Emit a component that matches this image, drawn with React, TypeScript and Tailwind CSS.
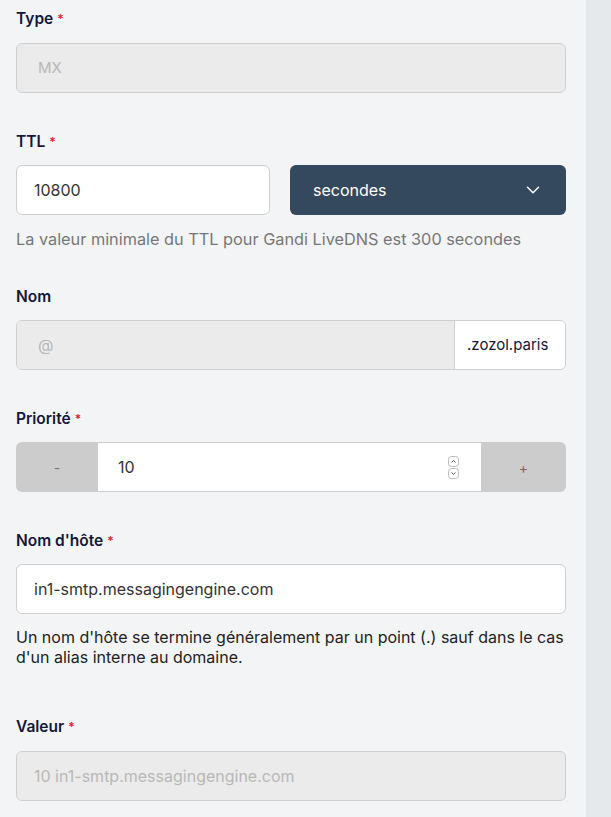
import { ChevronDown } from "lucide-react";

const font = { fontFamily: "Inter, 'Noto Sans', sans-serif" };

function Label({ text, required = true }: { text: string; required?: boolean }) {
  return (
    <div className="flex h-[20px] items-center text-[15.5px] font-semibold text-[#14163a]">
      {text}
      {required && <span className="ml-1 text-[12px] text-[#e4172c]">*</span>}
    </div>
  );
}

function Spinner() {
  return (
    <div className="flex flex-col gap-[1px]">
      <svg width="11" height="11" viewBox="0 0 11 11">
        <rect x="0.5" y="0.5" width="10" height="10" rx="3" fill="white" stroke="#bbb" />
        <path d="M3.5 6.5 L5.5 4.5 L7.5 6.5" fill="none" stroke="#555" strokeWidth="1" />
      </svg>
      <svg width="11" height="11" viewBox="0 0 11 11">
        <rect x="0.5" y="0.5" width="10" height="10" rx="3" fill="white" stroke="#bbb" />
        <path d="M3.5 4.5 L5.5 6.5 L7.5 4.5" fill="none" stroke="#555" strokeWidth="1" />
      </svg>
    </div>
  );
}

export default function App() {
  return (
    <div className="flex h-[817px] w-[611px] overflow-hidden bg-[#e6e9ec]" style={font}>
      <div className="w-[586px] bg-[#f3f4f6] pl-[16px] pr-[20px] pt-[9px]">
        {/* Type */}
        <Label text="Type" />
        <div className="mt-[14px] flex h-[50px] items-center rounded-[6px] border border-[#cfcfcf] bg-[#ebebeb] pl-[21px] text-[15px] text-[#b8b8b8]">
          MX
        </div>

        {/* TTL */}
        <div className="mt-[39px]">
          <Label text="TTL" />
        </div>
        <div className="mt-[13px] flex gap-[20px]">
          <div className="flex h-[50px] w-[254px] items-center rounded-[6px] border border-[#cfcfcf] bg-white pl-[17px] text-[16px] text-[#333]">
            10800
          </div>
          <div className="flex h-[50px] flex-1 items-center justify-between rounded-[6px] bg-[#34495e] pl-[23px] pr-[22px] text-[16px] text-white">
            secondes
            <ChevronDown size={22} strokeWidth={1.6} />
          </div>
        </div>
        <p className="mt-[14px] text-[16.3px] leading-[20px] text-[#777]">
          La valeur minimale du TTL pour Gandi LiveDNS est 300 secondes
        </p>

        {/* Nom */}
        <div className="mt-[38px]">
          <Label text="Nom" required={false} />
        </div>
        <div className="mt-[13px] flex h-[50px] overflow-hidden rounded-[6px] border border-[#cfcfcf]">
          <div className="flex flex-1 items-center bg-[#ebebeb] pl-[21px] text-[16px] text-[#b8b8b8]">@</div>
          <div className="flex w-[111px] items-center border-l border-[#cfcfcf] bg-white pl-[12px] text-[15px] text-[#14163a]">
            .zozol.paris
          </div>
        </div>

        {/* Priorité */}
        <div className="mt-[39px]">
          <Label text="Priorité" />
        </div>
        <div className="mt-[13px] flex h-[50px] overflow-hidden rounded-[6px] bg-[#cccccc]">
          <div className="flex w-[82px] items-center justify-center text-[14px] text-[#777]">-</div>
          <div className="my-[1px] flex flex-1 items-center justify-between bg-white pl-[20px] pr-[22px] text-[16px] text-[#333]">
            10
            <Spinner />
          </div>
          <div className="flex w-[85px] items-center justify-center text-[14px] text-[#8a5a5a]">+</div>
        </div>

        {/* Nom d'hôte */}
        <div className="mt-[39px]">
          <Label text="Nom d'hôte" />
        </div>
        <div className="mt-[13px] flex h-[50px] items-center rounded-[6px] border border-[#cfcfcf] bg-white pl-[17px] text-[16px] text-[#333]">
          in1-smtp.messagingengine.com
        </div>
        <p className="mt-[13px] text-[16px] leading-[20px] text-[#222]">
          Un nom d'hôte se termine généralement par un point (.) sauf dans le cas d'un alias interne au domaine.
        </p>

        {/* Valeur */}
        <div className="mt-[50px]">
          <Label text="Valeur" />
        </div>
        <div className="mt-[14px] flex h-[50px] items-center rounded-[6px] border border-[#cfcfcf] bg-[#ebebeb] pl-[17px] text-[16px] text-[#b8b8b8]">
          10 in1-smtp.messagingengine.com
        </div>
      </div>
    </div>
  );
}
